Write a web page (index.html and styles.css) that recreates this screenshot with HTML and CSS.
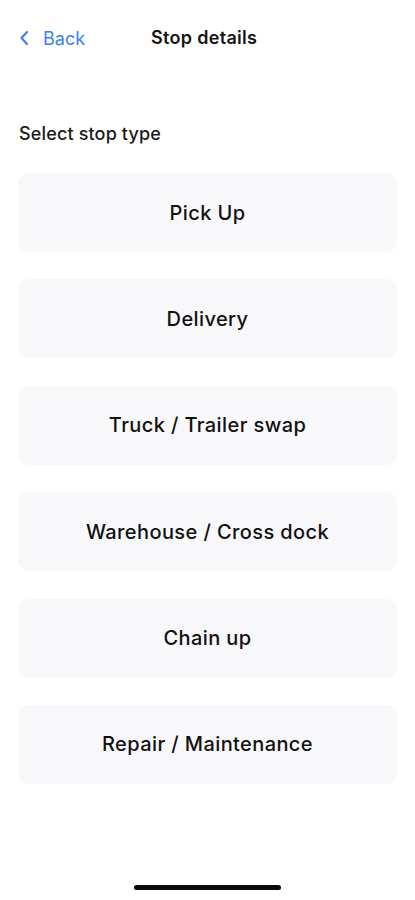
FILE: index.html
```html
<!DOCTYPE html>
<html lang="en">
<head>
    <meta charset="UTF-8">
    <meta name="viewport" content="width=device-width, initial-scale=1.0">
    <title>Stop details</title>
    <link rel="stylesheet" href="styles.css">
</head>
<body>
    <div class="screen">
        <header class="nav">
            <a class="back" href="#">
                <svg class="chevron" width="10" height="16" viewBox="0 0 10 16" fill="none">
                    <path d="M8 2L2.5 8L8 14" stroke="#3a82f0" stroke-width="2.2" stroke-linecap="round" stroke-linejoin="round"/>
                </svg>
                <span>Back</span>
            </a>
            <h1 class="title">Stop details</h1>
        </header>

        <main class="content">
            <h2 class="label">Select stop type</h2>

            <div class="options">
                <button class="option">Pick Up</button>
                <button class="option">Delivery</button>
                <button class="option">Truck / Trailer swap</button>
                <button class="option">Warehouse / Cross dock</button>
                <button class="option">Chain up</button>
                <button class="option">Repair / Maintenance</button>
            </div>
        </main>

        <div class="home-indicator"></div>
    </div>
</body>
</html>
```

FILE: styles.css
```css
* {
    box-sizing: border-box;
}
body {
    margin: 0;
    background: #ffffff;
    font-family: Inter, "Noto Sans", sans-serif;
    color: #111111;
}
.screen {
    width: 415px;
    height: 900px;
    display: flex;
    flex-direction: column;
}
.nav {
    height: 76px;
    padding: 26px 0 0 19px;
    display: flex;
    align-items: flex-start;
}
.back {
    display: flex;
    align-items: center;
    gap: 14px;
    height: 24px;
    color: #3a82f0;
    text-decoration: none;
    font-size: 18px;
    font-weight: 400;
}
.chevron {
    display: block;
}
.title {
    margin: 0 0 0 66px;
    height: 24px;
    line-height: 24px;
    font-size: 18px;
    letter-spacing: 0.3px;
    font-weight: 600;
    color: #151515;
}
.content {
    flex: 1;
    padding: 46px 18px 0 18px;
}
.label {
    margin: 0 0 0 1px;
    height: 24px;
    line-height: 24px;
    font-size: 18px;
    letter-spacing: 0.15px;
    font-weight: 500;
    color: #1a1a1a;
}
.options {
    margin-top: 27px;
    display: flex;
    flex-direction: column;
    gap: 27.4px;
}
.option {
    height: 79px;
    width: 379px;
    border: none;
    border-radius: 11px;
    background: #f8f8fa;
    font-family: inherit;
    font-size: 20px;
    letter-spacing: 0.4px;
    font-weight: 500;
    color: #111111;
    cursor: pointer;
}
.home-indicator {
    width: 147px;
    height: 5px;
    border-radius: 3px;
    background: #0a0a0a;
    margin: 0 auto 10px auto;
}
```
